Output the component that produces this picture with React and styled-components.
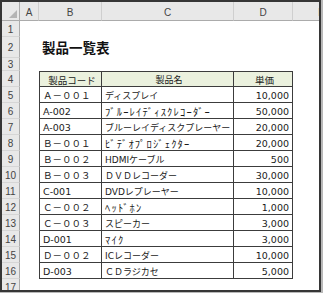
import React from "react"
import styled, { createGlobalStyle } from "styled-components"

const GlobalStyle = createGlobalStyle`
  html, body {
    margin: 0;
    padding: 0;
    background: #b8b8b8;
  }
`

const COLS = "18px 19px 63px 132px 59px 58px"

const Frame = styled.div`
  width: 321px;
  height: 292px;
  box-sizing: border-box;
  border: 2px solid #363636;
  background: #ffffff;
  overflow: hidden;
`

const Row = styled.div`
  display: grid;
  grid-template-columns: ${COLS};
  height: ${(p) => p.$h}px;
`

const ColHead = styled.div`
  background: #e8e8e8;
  border-right: 1px solid #cfcfcf;
  border-bottom: 1px solid #ababab;
  display: flex;
  align-items: center;
  justify-content: center;
  font-family: "Liberation Sans", Arial, sans-serif;
  font-size: 10px;
  color: #444;
  padding-top: 2px;
  box-sizing: border-box;
`

const Corner = styled(ColHead)`
  justify-content: flex-end;
  align-items: flex-end;
  padding: 0 2px 2px 0;
  border-right: 1px solid #ababab;
`

const RowNum = styled.div`
  background: #e8e8e8;
  border-right: 1px solid #ababab;
  border-bottom: 1px solid #d6d6d6;
  display: flex;
  align-items: center;
  justify-content: center;
  font-family: "Liberation Sans", Arial, sans-serif;
  font-size: 10px;
  color: #444;
  box-sizing: border-box;
  padding-top: 1px;
`

const Blank = styled.div``

const TitleCell = styled.div`
  grid-column: span 3;
  display: flex;
  align-items: flex-end;
  padding: 0 0 1px 3px;
  font-family: "Noto Sans CJK JP", sans-serif;
  font-weight: bold;
  font-size: 13.5px;
  color: #111;
  white-space: nowrap;
`

const Cell = styled.div`
  display: flex;
  align-items: center;
  justify-content: ${(p) => p.$align || "flex-start"};
  padding: 1px ${(p) => (p.$align === "flex-end" ? "3px" : "0")} 0
    ${(p) => (p.$align === "flex-end" ? "0" : "3px")};
  box-sizing: border-box;
  background: ${(p) => (p.$head ? "#ebf1de" : "#ffffff")};
  border-right: 1px solid #3c3c3c;
  border-bottom: 1px solid #3c3c3c;
  border-left: ${(p) => (p.$first ? "1px solid #3c3c3c" : "none")};
  border-top: ${(p) => (p.$top ? "1px solid #3c3c3c" : "none")};
  font-family: "DejaVu Sans", "Noto Sans CJK JP", sans-serif;
  font-size: ${(p) => (p.$hw ? 10.5 : p.$size || 9.5)}px;
  letter-spacing: ${(p) => (p.$hw ? "1.2px" : "0")};
  color: #1a1a1a;
  white-space: nowrap;
  overflow: hidden;
`

const SelectAll = () => (
  <svg width="8" height="8" viewBox="0 0 8 8">
    <polygon points="8,0 8,8 0,8" fill="#b4b4b4" />
  </svg>
)

const products = [
  ["Ａ－００１", "ディスプレイ", "10,000"],
  ["A-002", "ﾌﾞﾙｰﾚｲﾃﾞｨｽｸﾚｺｰﾀﾞｰ", "50,000"],
  ["A-003", "ブルーレイディスクプレーヤー", "20,000"],
  ["Ｂ－００１", "ﾋﾞﾃﾞｵﾌﾟﾛｼﾞｪｸﾀｰ", "20,000"],
  ["Ｂ－００２", "HDMIケーブル", "500"],
  ["Ｂ－００３", "ＤＶＤレコーダー", "30,000"],
  ["C-001", "DVDレプレーヤー", "10,000"],
  ["Ｃ－００２", "ﾍｯﾄﾞﾎﾝ", "1,000"],
  ["Ｃ－００３", "スピーカー", "3,000"],
  ["D-001", "ﾏｲｸ", "3,000"],
  ["Ｄ－００２", "ICレコーダー", "10,000"],
  ["D-003", "ＣＤラジカセ", "5,000"],
]

const halfWidth = (s) => /[\uFF61-\uFF9F]/.test(s)

const App = () => (
  <>
    <GlobalStyle />
    <Frame>
      <Row $h={19}>
        <Corner>
          <SelectAll />
        </Corner>
        <ColHead>A</ColHead>
        <ColHead>B</ColHead>
        <ColHead>C</ColHead>
        <ColHead>D</ColHead>
        <ColHead>E</ColHead>
      </Row>
      <Row $h={16}>
        <RowNum>1</RowNum>
      </Row>
      <Row $h={21}>
        <RowNum>2</RowNum>
        <Blank />
        <TitleCell>製品一覧表</TitleCell>
      </Row>
      <Row $h={13}>
        <RowNum>3</RowNum>
      </Row>
      <Row $h={16}>
        <RowNum>4</RowNum>
        <Blank />
        <Cell $head $top $first $align="center">製品コード</Cell>
        <Cell $head $top $align="center" $size={9}>製品名</Cell>
        <Cell $head $top $align="center">単価</Cell>
      </Row>
      {products.map(([code, name, price], i) => (
        <Row $h={16} key={code}>
          <RowNum>{i + 5}</RowNum>
          <Blank />
          <Cell $first>{code}</Cell>
          <Cell $size={9} $hw={halfWidth(name)}>
            {name}
          </Cell>
          <Cell $align="flex-end">{price}</Cell>
        </Row>
      ))}
      <Row $h={16}>
        <RowNum>17</RowNum>
      </Row>
    </Frame>
  </>
)

export default App
